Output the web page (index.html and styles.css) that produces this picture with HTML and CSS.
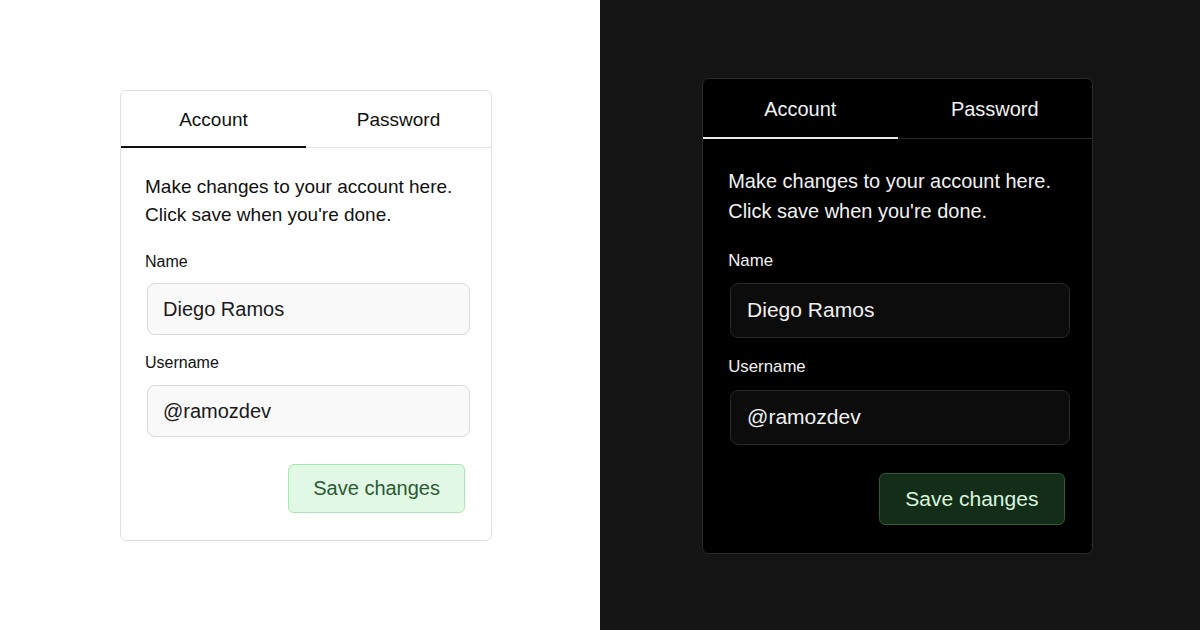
FILE: index.html
```html
<!DOCTYPE html>
<html lang="en">
<head>
<meta charset="utf-8">
<title>Tabs – Account</title>
<link rel="stylesheet" href="styles.css">
</head>
<body>
<main class="split">
  <section class="panel panel-light">
    <div class="card">
      <div class="tablist">
        <button class="tab tab-active">Account</button>
        <button class="tab">Password</button>
      </div>
      <div class="content">
        <p class="desc">Make changes to your account here.<br>Click save when you're done.</p>
        <label class="label label-name">Name</label>
        <div class="input">Diego Ramos</div>
        <label class="label label-user">Username</label>
        <div class="input">@ramozdev</div>
        <div class="actions"><button class="save">Save changes</button></div>
      </div>
    </div>
  </section>
  <section class="panel panel-dark">
    <div class="card">
      <div class="tablist">
        <button class="tab tab-active">Account</button>
        <button class="tab">Password</button>
      </div>
      <div class="content">
        <p class="desc">Make changes to your account here.<br>Click save when you're done.</p>
        <label class="label label-name">Name</label>
        <div class="input">Diego Ramos</div>
        <label class="label label-user">Username</label>
        <div class="input">@ramozdev</div>
        <div class="actions"><button class="save">Save changes</button></div>
      </div>
    </div>
  </section>
</main>
</body>
</html>
```

FILE: styles.css
```css
* { box-sizing: border-box; }
html, body { margin: 0; padding: 0; }
body {
  width: 1200px;
  height: 630px;
  overflow: hidden;
  font-family: "Liberation Sans", Arial, sans-serif;
}
.split {
  display: flex;
  width: 1200px;
  height: 630px;
}
.panel {
  flex: 0 0 600px;
  height: 630px;
  display: flex;
  align-items: center;
  justify-content: center;
}
.panel-light {
  background: #ffffff;
  padding-left: 12px;
  padding-top: 1px;
  --fg: #111111;
  --card-bg: #ffffff;
  --card-border: #e0e0e0;
  --sep: #e6e6e6;
  --active: #111111;
  --input-bg: #f9f9f9;
  --input-border: #dadada;
  --input-fg: #1a1a1a;
  --btn-bg: #e1f8e4;
  --btn-border: #a6e9b1;
  --btn-fg: #2b5a33;
}
.panel-dark {
  background: #141414;
  padding-right: 5px;
  padding-top: 2px;
  --fg: #f2f2f2;
  --card-bg: #000000;
  --card-border: #2a2a2a;
  --sep: #2a2a2a;
  --active: #e8e8e8;
  --input-bg: #0c0c0c;
  --input-border: #2a2a2a;
  --input-fg: #f0f0f0;
  --btn-bg: #132d19;
  --btn-border: #2d5f37;
  --btn-fg: #d9f5dd;
}
.panel-dark .card { zoom: 1.051; }
.panel-dark .content { padding-top: 27px; }

.card {
  width: 372px;
  background: var(--card-bg);
  border: 1px solid var(--card-border);
  border-radius: 6px;
  color: var(--fg);
  overflow: hidden;
}
.tablist {
  display: flex;
  height: 57px;
  border-bottom: 1px solid var(--sep);
}
.tab {
  flex: 1 1 0;
  background: none;
  border: 0;
  padding: 0;
  margin: 0 0 -1px 0;
  font-family: inherit;
  font-size: 19px;
  color: var(--fg);
  position: relative;
  cursor: pointer;
}
.tab-active::after {
  content: "";
  position: absolute;
  left: 0;
  right: 0;
  bottom: 0;
  height: 2px;
  background: var(--active);
}
.content {
  display: flex;
  flex-direction: column;
  padding: 25px 24px 27px 24px;
}
.desc {
  margin: 0;
  font-size: 19px;
  line-height: 28px;
}
.label {
  display: block;
  font-size: 16px;
  line-height: 20px;
  margin-bottom: 11px;
}
.label-name { margin-top: 23px; }
.label-user { margin-top: 18px; margin-bottom: 12px; }
.input {
  width: 323px;
  height: 52px;
  margin-left: 2px;
  padding: 0 15px;
  display: flex;
  align-items: center;
  background: var(--input-bg);
  border: 1px solid var(--input-border);
  border-radius: 8px;
  font-size: 20px;
  color: var(--input-fg);
}
.actions {
  display: flex;
  justify-content: flex-end;
  margin-top: 27px;
  padding-right: 2px;
}
.save {
  height: 49px;
  padding: 0 24px;
  background: var(--btn-bg);
  border: 1px solid var(--btn-border);
  border-radius: 6px;
  color: var(--btn-fg);
  font-family: inherit;
  font-size: 20px;
  cursor: pointer;
}
```
